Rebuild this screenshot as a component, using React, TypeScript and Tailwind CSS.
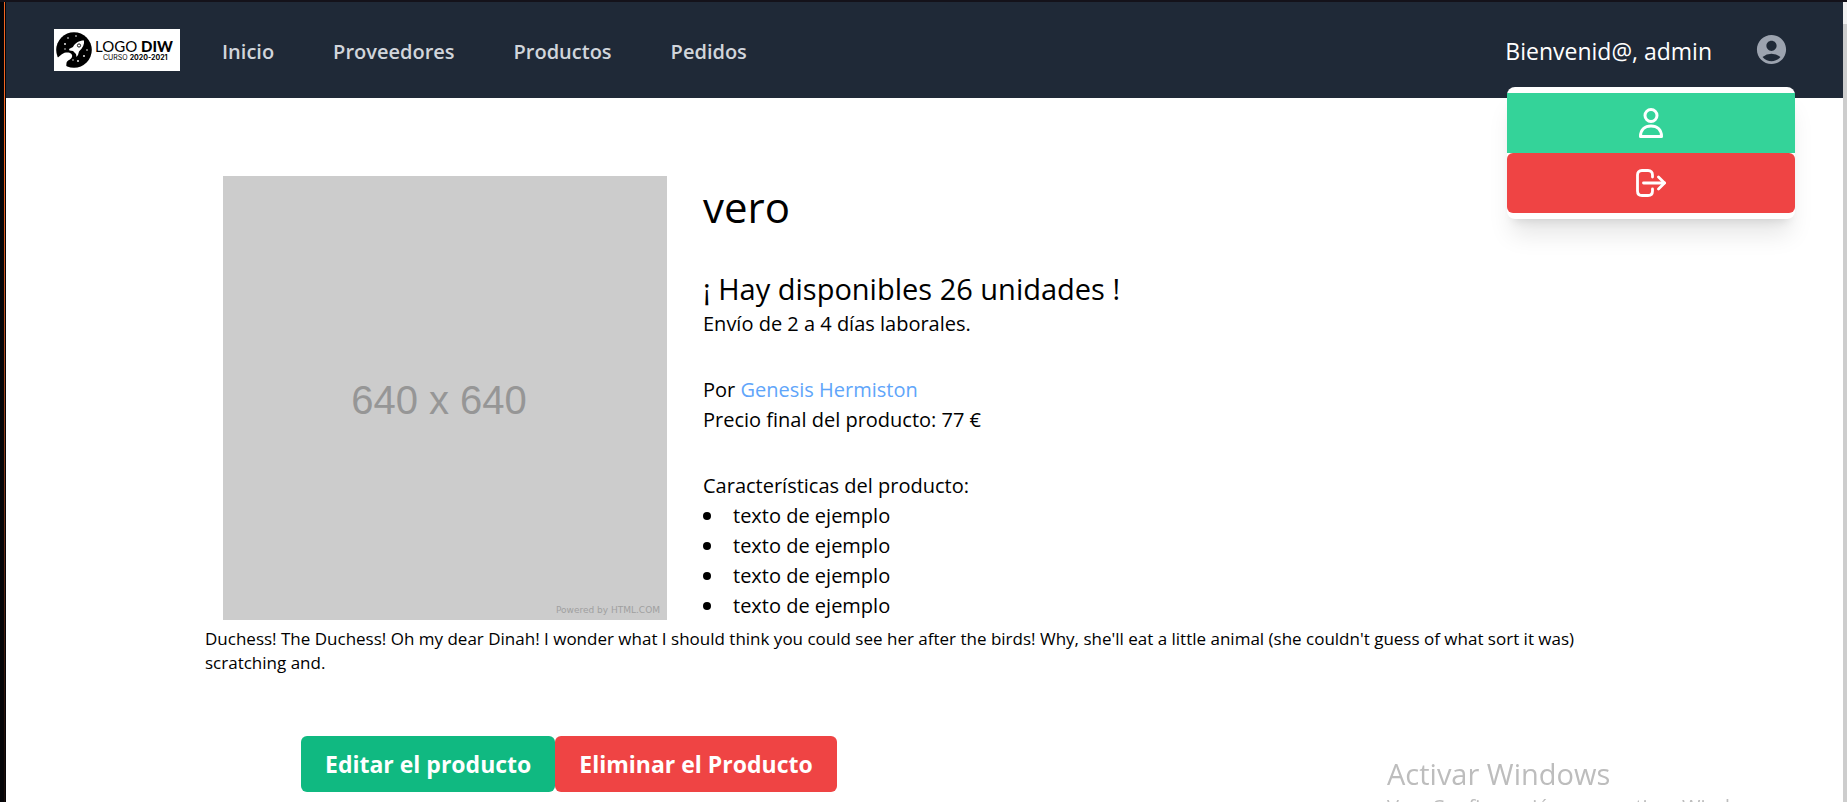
import { MdAccountCircle } from "react-icons/md";

const links = ["Inicio", "Proveedores", "Productos", "Pedidos"];
const features = [1, 2, 3, 4];

function Logo() {
  return (
    <a
      href="#"
      className="flex h-[42px] w-[126px] shrink-0 items-center gap-[3px] bg-white pl-[2px] text-black"
    >
      <svg viewBox="0 0 36 38" className="h-[38px] w-9 shrink-0" aria-hidden="true">
        <circle cx="18" cy="19" r="17.8" fill="#000" />
        <path d="M0 28 C3 26 6 22 10 21.500 C14 21 17 23 16 26 C15 29 11 29 10.500 32 C10.300 34 10 36 11 38 L0 38Z" fill="#fff" />
        <path
          d="M28 9.500 C23 9.500 19 12 17 16 L13 18 L13.500 19.500 L17 20 L20 23 L20.500 26 L22 24 L23 20.500 C27 17 28.500 13 28 9.500Z"
          fill="#fff"
        />
        <circle cx="23" cy="14.500" r="1.600" fill="#fff" stroke="#000" strokeWidth="0.900" />
        <g fill="#fff">
          <circle cx="9" cy="13" r="0.900" />
          <circle cx="12" cy="7" r="0.800" />
          <circle cx="20" cy="5" r="0.800" />
          <circle cx="9" cy="18" r="0.700" />
          <circle cx="31" cy="19" r="0.800" />
          <circle cx="28" cy="25" r="0.900" />
          <circle cx="22" cy="30" r="0.900" />
          <circle cx="17" cy="29" r="0.700" />
        </g>
      </svg>
      <span className="flex flex-col whitespace-nowrap">
        <span className="font-[Lato,sans-serif] text-[15px] leading-[14px]">
          LOGO <b className="font-black">DIW</b>
        </span>
        <span className="pl-2 font-[Inter,sans-serif] text-[7px] leading-[9px]">
          CURSO <b className="font-bold">2020-2021</b>
        </span>
      </span>
    </a>
  );
}

function UserMenu() {
  return (
    <div className="absolute top-[85px] right-12 flex w-72 flex-col rounded-lg bg-white py-[6px] shadow-xl">
      <button type="button" aria-label="Perfil" className="flex h-[60px] items-center justify-center bg-[#34d399] text-white">
        <svg viewBox="0 0 30 30" className="size-[30px]" fill="none" stroke="currentColor" strokeWidth="3" strokeLinejoin="round" aria-hidden="true">
          <circle cx="15" cy="7.500" r="6" />
          <path d="M4.500 28.500 C4.500 21.500 9 18 15 18 C21 18 25.500 21.500 25.500 28.500Z" />
        </svg>
      </button>
      <button type="button" aria-label="Cerrar sesión" className="flex h-[60px] items-center justify-center rounded-md bg-[#ef4444] text-white">
        <svg viewBox="0 0 30 30" className="size-[30px]" fill="none" stroke="currentColor" strokeWidth="2.800" strokeLinecap="round" strokeLinejoin="round" aria-hidden="true">
          <path d="M16.500 9 V7 Q16.500 2.500 12 2.500 H6 Q1.500 2.500 1.500 7 V23 Q1.500 27.500 6 27.500 H12 Q16.500 27.500 16.500 23 V21" />
          <path d="M7.500 15 H28.500" />
          <path d="M22.500 9 L28.500 15 L22.500 21" />
        </svg>
      </button>
    </div>
  );
}

function Navbar() {
  return (
    <header className="relative flex h-24 items-center bg-[#1f2937] pr-[54px] pl-12">
      <Logo />
      <nav className="flex gap-[59px] pt-1 pl-[42px]">
        {links.map((l) => (
          <a key={l} href="#" className="text-[20px] leading-[30px] font-semibold text-[#d1d5db]">
            {l}
          </a>
        ))}
      </nav>
      <span className="ml-auto pt-[2px] text-[23px] leading-9 text-white">Bienvenid@, admin</span>
      <button type="button" aria-label="Cuenta" className="ml-[42px] pb-[2px] text-[#9ca3af]">
        <MdAccountCircle className="size-[35px]" />
      </button>
      <UserMenu />
    </header>
  );
}

function Product() {
  return (
    <main className="pt-[78px] pr-[246px] pl-[199px] text-black">
      <section className="flex gap-9 pl-[18px]">
        <figure className="relative flex size-[444px] shrink-0 items-center justify-center bg-[#cccccc] pt-1 pr-3">
          <span className="font-['Liberation_Sans_Narrow','Liberation_Sans',sans-serif] text-[40px] text-[#969696]">
            640 x 640
          </span>
          <figcaption className="absolute right-[7px] bottom-1 font-['DejaVu_Sans',sans-serif] text-[9px] leading-3 text-[#a0a0a0]">
            Powered by HTML.COM
          </figcaption>
        </figure>
        <div className="flex flex-col text-[20px] leading-[30px]">
          <h1 className="pt-1 text-[42px] leading-[54px]">vero</h1>
          <h2 className="pt-[35px] text-[29px] leading-10">¡ Hay disponibles 26 unidades !</h2>
          <p>Envío de 2 a 4 días laborales.</p>
          <p className="pt-9">
            Por{" "}
            <a href="#" className="text-[#60a5fa]">
              Genesis Hermiston
            </a>
          </p>
          <p>Precio final del producto: 77 €</p>
          <p className="pt-9">Características del producto:</p>
          <ul>
            {features.map((f) => (
              <li key={f} className="flex items-center gap-[22px] before:size-2 before:rounded-full before:bg-black">
                texto de ejemplo
              </li>
            ))}
          </ul>
        </div>
      </section>
      <p className="pt-[6px] text-[17px] leading-6">
        Duchess! The Duchess! Oh my dear Dinah! I wonder what I should think you could see her after the birds! Why,
        she'll eat a little animal (she couldn't guess of what sort it was) scratching and.
      </p>
      <div className="flex pt-[61px] pl-24">
        <button type="button" className="h-14 rounded-md bg-[#10b981] px-6 text-[23px] font-bold text-white">
          Editar el producto
        </button>
        <button type="button" className="h-14 rounded-md bg-[#ef4444] px-6 text-[23px] font-bold text-white">
          Eliminar el Producto
        </button>
      </div>
    </main>
  );
}

export default function App() {
  return (
    <div className="flex h-screen overflow-hidden border-t-2 border-[#14121a] bg-white font-['Open_Sans','Noto_Sans',sans-serif]">
      <div className="flex w-[6px] shrink-0 justify-end bg-[#050508] pr-px">
        <div className="w-px bg-linear-to-b from-[#f26522] from-20% to-[#1c0c08] to-95%" />
      </div>
      <div className="min-w-0 flex-1">
        <Navbar />
        <Product />
      </div>
      <div className="w-1 shrink-0 bg-[#f1f1f1] pt-[22px]">
        <div className="h-full bg-[#cdcdcd]" />
      </div>
      <div className="pointer-events-none fixed right-[60px] -bottom-5 w-[400px] text-[#bdbdbd]">
        <p className="text-[29px] leading-9">Activar Windows</p>
        <p className="text-[20px] leading-[30px] whitespace-nowrap">Ve a Configuración para activar Windows.</p>
      </div>
    </div>
  );
}
